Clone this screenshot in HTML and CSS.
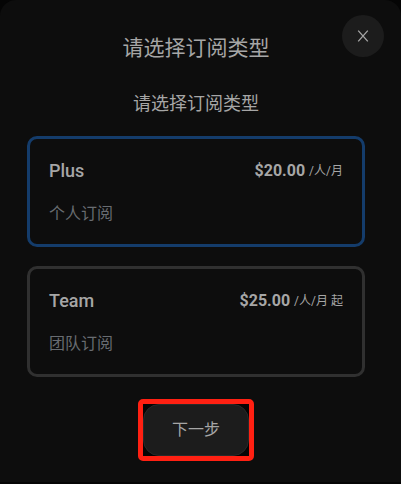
FILE: index.html
```html
<!DOCTYPE html>
<html lang="zh-CN">
<head>
<meta charset="utf-8">
<meta name="viewport" content="width=device-width, initial-scale=1">
<title>请选择订阅类型</title>
<link rel="stylesheet" href="styles.css">
</head>
<body>
<main class="dialog">
  <button class="close" type="button" aria-label="关闭">
    <svg viewBox="0 0 12 12" aria-hidden="true"><path d="M1.2.6 10.8 11.4M10.8.6 1.2 11.4"/></svg>
  </button>
  <h1 class="title">请选择订阅类型</h1>
  <p class="subtitle">请选择订阅类型</p>
  <div class="plans">
    <button class="plan plan-selected" type="button">
      <span class="plan-head">
        <span class="plan-name">Plus</span>
        <span class="price"><strong class="amount">$20.00</strong><span class="unit">/人/月</span></span>
      </span>
      <span class="plan-note">个人订阅</span>
    </button>
    <button class="plan" type="button">
      <span class="plan-head">
        <span class="plan-name">Team</span>
        <span class="price"><strong class="amount">$25.00</strong><span class="unit">/人/月 起</span></span>
      </span>
      <span class="plan-note">团队订阅</span>
    </button>
  </div>
  <div class="highlight">
    <button class="next" type="button">下一步</button>
  </div>
</main>
</body>
</html>
```
FILE: styles.css
```css
* {
  box-sizing: border-box;
}

body {
  margin: 0;
  min-height: 100vh;
  padding-bottom: 2px;
  display: flex;
  background: #050505;
  color: #a6a6a6;
  font-family: Roboto, "Noto Sans CJK SC", sans-serif;
}

button {
  color: inherit;
  font-family: inherit;
  cursor: pointer;
}

.dialog {
  position: relative;
  flex: 1;
  display: flex;
  flex-direction: column;
  align-items: center;
  padding: 33px 36px 20px 27px;
  border-radius: 16px 16px 0 0;
  background: #0d0d0d;
}

.close {
  position: absolute;
  top: 15px;
  right: 17px;
  width: 42px;
  height: 42px;
  padding: 0;
  display: grid;
  place-items: center;
  border: 0;
  border-radius: 50%;
  background: #1c1c1c;
}

.close svg {
  width: 12px;
  height: 12px;
  fill: none;
  stroke: #a6a6a6;
  stroke-width: 1.3;
}

.title {
  margin: 0;
  font-size: 21px;
  font-weight: 400;
  line-height: 30px;
}

.subtitle {
  margin: 28px 0 19px;
  font-size: 18px;
  line-height: 26px;
}

.plans {
  width: 100%;
  display: grid;
  gap: 19px;
}

.plan {
  display: flex;
  flex-direction: column;
  gap: 19px;
  padding: 20px 19px 18px;
  border: 3px solid #303030;
  border-radius: 10px;
  background: none;
  text-align: left;
}

.plan-selected {
  border-color: #143c6b;
}

.plan-head {
  width: 100%;
  display: flex;
  justify-content: space-between;
  align-items: center;
  line-height: 24px;
}

.plan-name {
  font-size: 18px;
  font-weight: 500;
}

.price {
  display: flex;
  align-items: center;
  gap: 4px;
}

.amount {
  font-size: 16px;
  font-weight: 700;
}

.unit {
  font-size: 12px;
}

.plan-note {
  color: #686c71;
  font-size: 16px;
  line-height: 24px;
}

.highlight {
  margin-top: 22px;
  border: 5px solid #ff2012;
  border-radius: 5px;
  background: #050505;
}

.next {
  display: block;
  width: 106px;
  height: 52px;
  padding: 0 0 4px;
  border: 1px solid #292929;
  border-radius: 16px;
  background: #1c1c1c;
  font-size: 16px;
}
```
